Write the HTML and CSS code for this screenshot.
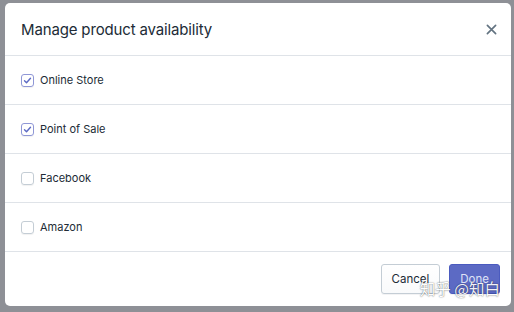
FILE: index.html
```html
<!DOCTYPE html>
<html lang="en">
<head>
    <meta charset="UTF-8">
    <meta name="viewport" content="width=device-width, initial-scale=1.0">
    <title>Manage product availability</title>
    <link rel="stylesheet" href="styles.css">
</head>
<body>
    <div class="modal">
        <div class="modal-header">
            <h2>Manage product availability</h2>
            <span class="close">
                <svg width="11" height="11" viewBox="0 0 12 12"><path d="M1.5 1.5l9 9M10.5 1.5l-9 9" stroke="#637381" stroke-width="1.8" stroke-linecap="round"/></svg>
            </span>
        </div>
        <label class="row"><span class="check on"><svg width="9" height="9" viewBox="0 0 9 9"><path d="M1.5 4.8l2 2 4-4.6" fill="none" stroke="#5c6ac4" stroke-width="1.4" stroke-linecap="round" stroke-linejoin="round"/></svg></span>Online Store</label>
        <label class="row"><span class="check on"><svg width="9" height="9" viewBox="0 0 9 9"><path d="M1.5 4.8l2 2 4-4.6" fill="none" stroke="#5c6ac4" stroke-width="1.4" stroke-linecap="round" stroke-linejoin="round"/></svg></span>Point of Sale</label>
        <label class="row"><span class="check"></span>Facebook</label>
        <label class="row"><span class="check"></span>Amazon</label>
        <div class="modal-footer">
            <button class="btn">Cancel</button>
            <button class="btn primary">Done</button>
        </div>
        <div class="watermark">知乎 @知白</div>
    </div>
</body>
</html>
```

FILE: styles.css
```css
body {
    margin: 0;
    height: 312px;
    background: #8e9096;
    font-family: Inter, "Liberation Sans", sans-serif;
    color: #212b36;
    overflow: hidden;
}
.modal {
    position: relative;
    margin: 3px 3px 0 5px;
    height: 303px;
    background: #fff;
    border-radius: 5px;
    box-sizing: border-box;
}
.modal-header {
    display: flex;
    align-items: center;
    justify-content: space-between;
    height: 52px;
    padding: 0 12px 0 16px;
    border-bottom: 1px solid #dfe3e8;
}
.modal-header h2 {
    margin: 0;
    font-size: 15px;
    font-weight: 400;
    letter-spacing: -0.15px;
}
.close {
    display: flex;
    padding: 2px;
}
.row {
    display: flex;
    align-items: center;
    height: 48px;
    padding: 0 16px;
    border-bottom: 1px solid #dfe3e8;
    font-size: 11px;
}
.check {
    display: flex;
    align-items: center;
    justify-content: center;
    width: 11px;
    height: 11px;
    margin-right: 6px;
    border: 1px solid #c4cdd5;
    border-radius: 3px;
    box-shadow: 0 1px 1px rgba(0, 0, 0, 0.06);
}
.check.on {
    border-color: #8f97d6;
}
.modal-footer {
    display: flex;
    justify-content: flex-end;
    gap: 9px;
    padding: 12px 11px 0 0;
}
.btn {
    height: 30px;
    padding: 0 10px;
    border: 1px solid #c4cdd5;
    border-radius: 3px;
    background: linear-gradient(#fff, #f9fafb);
    box-shadow: 0 1px 0 rgba(22, 29, 37, 0.05);
    font-family: inherit;
    font-size: 11.5px;
    color: #212b36;
}
.btn.primary {
    padding: 0 10px;
    background: #5c6ac4;
    border-color: #4b5bbf;
    color: #dfe2f6;
}
.watermark {
    position: absolute;
    right: 11px;
    bottom: 7px;
    font-family: "Noto Sans CJK SC", sans-serif;
    font-size: 15.5px;
    color: #fff;
    text-shadow: 0 0 1px rgba(0, 0, 0, 0.6), 0 0 2px rgba(0, 0, 0, 0.3);
    opacity: 0.9;
}
```
